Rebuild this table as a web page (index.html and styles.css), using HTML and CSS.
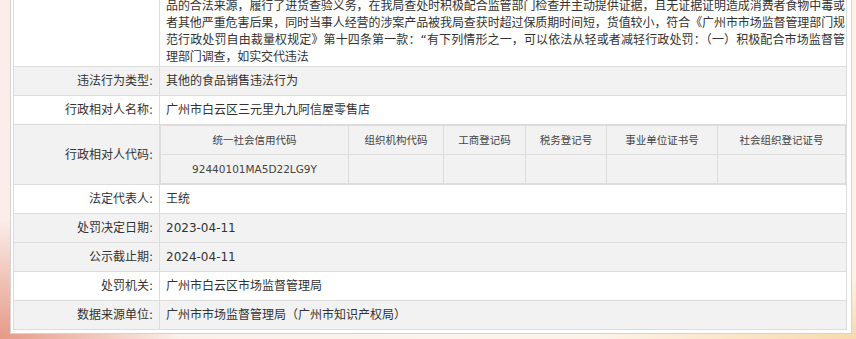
FILE: index.html
```html
<!DOCTYPE html>
<html>
<head>
	<meta charset="utf-8">
	<title>行政处罚信息</title>
	<link rel="stylesheet" href="styles.css">
</head>

<body>
	<div class="panel">
		<table class="info">
			<colgroup>
				<col class="labelCol">
				<col>
			</colgroup>
			<tr class="white">
				<td class="label"></td>
				<td class="value longText">
					<div class="textBlock">
						<span class="line">品的合法来源，履行了进货查验义务，在我局查处时积极配合监管部门检查并主动提供证据，且无证据证明造成消费者食物中毒或</span>
						<span class="line">者其他严重危害后果，同时当事人经营的涉案产品被我局查获时超过保质期时间短，货值较小，符合《广州市市场监督管理部门规</span>
						<span class="line">范行政处罚自由裁量权规定》第十四条第一款：“有下列情形之一，可以依法从轻或者减轻行政处罚：（一）积极配合市场监督管</span>
						<span class="lastLine">理部门调查，如实交代违法</span>
					</div>
				</td>
			</tr>
			<tr class="gray">
				<td class="label">违法行为类型:</td>
				<td class="value">其他的食品销售违法行为</td>
			</tr>
			<tr class="white">
				<td class="label">行政相对人名称:</td>
				<td class="value">广州市白云区三元里九九阿信屋零售店</td>
			</tr>
			<tr class="gray">
				<td class="label">行政相对人代码:</td>
				<td class="value codeCell">
					<!-- code table: one column per kind of registration number -->
					<table class="codes">
						<colgroup>
							<col style="width:188px">
							<col style="width:95px">
							<col style="width:82px">
							<col style="width:81px">
							<col style="width:111px">
							<col>
						</colgroup>
						<tr>
							<th>统一社会信用代码</th>
							<th>组织机构代码</th>
							<th>工商登记码</th>
							<th>税务登记号</th>
							<th>事业单位证书号</th>
							<th>社会组织登记证号</th>
						</tr>
						<tr>
							<td>92440101MA5D22LG9Y</td>
							<td></td>
							<td></td>
							<td></td>
							<td></td>
							<td></td>
						</tr>
					</table>
				</td>
			</tr>
			<tr class="white">
				<td class="label">法定代表人:</td>
				<td class="value">王统</td>
			</tr>
			<tr class="gray">
				<td class="label">处罚决定日期:</td>
				<td class="value">2023-04-11</td>
			</tr>
			<tr class="gray">
				<td class="label">公示截止期:</td>
				<td class="value">2024-04-11</td>
			</tr>
			<tr class="white">
				<td class="label">处罚机关:</td>
				<td class="value">广州市白云区市场监督管理局</td>
			</tr>
			<tr class="gray">
				<td class="label">数据来源单位:</td>
				<td class="value">广州市市场监督管理局（广州市知识产权局）</td>
			</tr>
		</table>
	</div>
</body>
</html>
```

FILE: styles.css
```css
/* Page */
body {
  margin: 0;
  font-family: "DejaVu Sans", "Noto Sans CJK SC", sans-serif;
  font-size: 12px;
  color: #333;
  background-color: #fcefe6;
  background-image:
    radial-gradient(ellipse 180px 120px at 0 100%, #e59a86 0%, rgba(229,154,134,0) 100%),
    radial-gradient(ellipse 260px 60px at 100% 100%, #f8d9ae 0%, rgba(248,217,174,0) 100%),
    linear-gradient(to right, #fbede9 0%, #fcf3ec 50%, #fdf2e3 100%);
}

/* White box around the table (top is scrolled out of view) */
.panel {
  margin: 0 4px 5px 10px;
  padding: 0 4px 3px 2px;
  background-color: #fff;
  border: 1px solid #d4d4d4;
  border-top: none;
}

/* Main info table */
.info {
  width: 100%;
  border-collapse: collapse;
  table-layout: fixed;
  border: 1px solid #dcdcdc;
  border-top: none;
}
.labelCol {
  width: 146px;
}
.info td {
  border: 1px solid #dcdcdc;
  height: 28px;
  padding: 0 6px;
  line-height: 18px;
  vertical-align: middle;
}
.info tr:first-child td {
  border-top: none;
}

.white td {
  background-color: #fff;
}
.gray td {
  background-color: #f2f2f2;
}

.label {
  text-align: right;
  padding-right: 6px !important;
  white-space: nowrap;
}
.value {
  text-align: left;
}

/* Long description text, three justified lines and a short last one */
.longText {
  line-height: 17px !important;
  padding: 0 1px 0 6px !important;
  vertical-align: bottom !important;
}
.textBlock {
  margin-top: -2px;
}
.textBlock .line {
  display: block;
  white-space: nowrap;
  letter-spacing: -0.12px;
  text-align: justify;
  text-align-last: justify;
}
.textBlock .lastLine {
  display: block;
  letter-spacing: -0.12px;
}

/* Nested table of registration codes */
.codeCell {
  padding: 0 !important;
}
.codes {
  width: 100%;
  border-collapse: collapse;
  table-layout: fixed;
  border: 1px solid #dcdcdc;
  font-size: 10.5px;
}
.codes th,
.codes td {
  border: 1px solid #dcdcdc;
  background-color: #f2f2f2;
  height: 28px;
  padding: 0;
  text-align: center;
  font-weight: normal;
  color: #444;
}
```
